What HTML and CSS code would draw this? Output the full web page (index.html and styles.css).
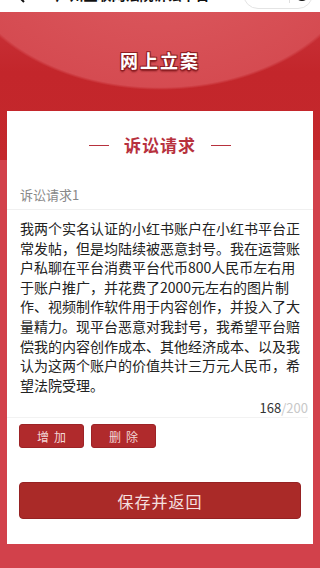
FILE: index.html
```html
<!DOCTYPE html>
<html lang="zh-CN">
<head>
<meta charset="utf-8">
<meta name="viewport" content="width=device-width, initial-scale=1">
<title>网上立案</title>
<link rel="stylesheet" href="styles.css">
</head>
<body>
<div class="navbar">
  <div class="navbar-inner">
    <svg class="nav-back" width="12" height="20" viewBox="0 0 12 20"><path d="M10 2 L2 10 L10 18" fill="none" stroke="#111" stroke-width="2"/></svg>
    <div class="nav-title">广州互联网法院诉讼平台</div>
    <div class="capsule">
      <span class="cap-dots">•••</span>
      <span class="cap-sep"></span>
      <span class="cap-circle"></span>
    </div>
  </div>
</div>
<div class="main">
  <div class="hero">
    <h1 class="hero-title">网上立案</h1>
  </div>
  <div class="card">
    <div class="section-title"><span>诉讼请求</span></div>
    <div class="field-label">诉讼请求1</div>
    <div class="field-text">
      <div>我两个实名认证的小红书账户在小红书平台正</div>
      <div>常发帖，但是均陆续被恶意封号。我在运营账</div>
      <div>户私聊在平台消费平台代币800人民币左右用</div>
      <div>于账户推广，并花费了2000元左右的图片制</div>
      <div>作、视频制作软件用于内容创作，并投入了大</div>
      <div>量精力。现平台恶意对我封号，我希望平台赔</div>
      <div>偿我的内容创作成本、其他经济成本、以及我</div>
      <div>认为这两个账户的价值共计三万元人民币，希</div>
      <div>望法院受理。</div>
    </div>
    <div class="counter"><span class="count-now">168</span><span class="count-max">/200</span></div>
    <div class="btn-row">
      <button class="btn-small">增加</button>
      <button class="btn-small">删除</button>
    </div>
    <button class="btn-save">保存并返回</button>
  </div>
</div>
</body>
</html>
```

FILE: styles.css
```css
* { box-sizing: border-box; }
html, body { margin: 0; padding: 0; }
body {
  width: 320px;
  min-height: 568px;
  background: #d2414b;
  font-family: "Noto Sans CJK SC", "Noto Sans", sans-serif;
  color: #222;
}
.navbar {
  height: 12px;
  overflow: hidden;
  background: #fff;
}
.navbar-inner {
  height: 44px;
  margin-top: -28px;
  display: flex;
  align-items: center;
  padding: 0 7px 0 14px;
}
.nav-back { flex: none; }
.nav-title {
  flex: 1;
  text-align: center;
  font-size: 14px;
  font-weight: 700;
  color: #111;
  padding-right: 4px;
  white-space: nowrap;
}
.capsule {
  flex: none;
  width: 70px;
  height: 30px;
  border: 1px solid #e4e4e4;
  border-radius: 15px;
  display: flex;
  align-items: center;
  justify-content: space-around;
}
.cap-dots { font-size: 12px; color: #111; }
.cap-sep { width: 1px; height: 18px; background: #e0e0e0; }
.cap-circle {
  width: 14px; height: 14px;
  border: 2px solid #111;
  border-radius: 50%;
}
.main {
  background:
    radial-gradient(ellipse 205px 140px at 50% -62px, #dc5b61 0%, #d54b51 98%, rgba(197,40,45,0) 100%),
    linear-gradient(to bottom, #c9333a 0, #c3262b 60px, #c4282c 148px, #d2414b 148px, #d2414b 100%);
  padding-bottom: 24px;
}
.hero {
  height: 99px;
  padding-top: 36px;
  text-align: center;
}
.hero-title {
  margin: 0;
  font-size: 18px;
  line-height: 24px;
  font-weight: 700;
  letter-spacing: 2px;
  color: #fff;
  text-shadow: 1px 1px 0 #8e1d22, -1px -1px 0 #8e1d22, 1px -1px 0 #8e1d22, -1px 1px 0 #8e1d22, 0 2px 2px #7a1519;
}
.card {
  margin: 0 7px;
  background: #fff;
  padding: 22px 12px 25px;
}
.section-title {
  display: flex;
  justify-content: center;
  align-items: center;
  gap: 15px;
  color: #b7313d;
  font-size: 17px;
  line-height: 24px;
  font-weight: 700;
  letter-spacing: 1px;
}
.section-title::before,
.section-title::after {
  content: "";
  width: 20px;
  height: 1px;
  background: #b7313d;
}
.field-label {
  margin: 29px -12px 0;
  padding: 0 13px 5px;
  font-size: 13px;
  line-height: 18px;
  color: #888;
  border-bottom: 1px solid #f0f0f0;
}
.field-text {
  padding: 9px 0 0 1px;
  font-size: 14px;
  line-height: 19.6px;
  color: #222;
  white-space: nowrap;
}
.counter {
  margin: 5px -7px 0 -12px;
  padding-bottom: 1px;
  text-align: right;
  font-size: 13px;
  line-height: 16px;
  border-bottom: 1px solid #f2f2f2;
}
.count-now { color: #333; }
.count-max { color: #c8c8c8; }
.btn-row {
  display: flex;
  gap: 7px;
  margin-top: 6px;
}
.btn-small {
  width: 65px;
  height: 24px;
  border: 1px solid #9d2326;
  border-radius: 3px;
  background: #b02a2c;
  color: #f3d6d6;
  font-family: inherit;
  font-size: 12px;
  letter-spacing: 5px;
  text-indent: 5px;
  padding: 0;
}
.btn-save {
  display: block;
  width: 100%;
  height: 37px;
  margin-top: 34px;
  border: 1px solid #962223;
  border-radius: 4px;
  background: #aa2a28;
  color: #f6e0e0;
  font-family: inherit;
  font-size: 16px;
  letter-spacing: 1px;
  padding: 0;
}
```
